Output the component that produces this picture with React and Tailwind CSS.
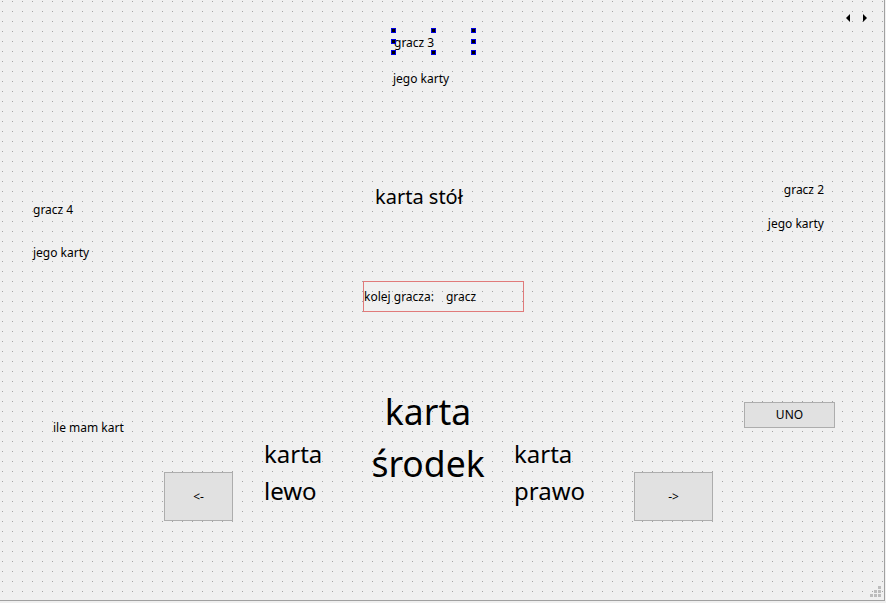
import React from "react";

const font = { fontFamily: '"Noto Sans", "Liberation Sans", sans-serif' };

function Button({ className = "", children }) {
  return (
    <div
      className={`absolute flex items-center justify-center border border-[#adadad] bg-[#e1e1e1] text-[12px] leading-none text-black ${className}`}
    >
      {children}
    </div>
  );
}

function Handle() {
  return <div className="h-[5px] w-[5px] border border-[#0000e0] bg-black" />;
}

export default function App() {
  return (
    <div className="h-[603px] w-[886px] overflow-hidden bg-[#f0f0f0]" style={font}>
      <div className="relative box-border h-[601px] w-[885px] border-b border-r border-[#a0a0a0] bg-[#f0f0f0] bg-[radial-gradient(circle_at_2.5px_1.5px,#a4a4a4_0.75px,transparent_0.85px)] bg-size-[10px_10px] text-[12px] leading-none text-black">
        {/* top-right scroll arrows */}
        <div className="absolute left-[846px] top-[14px] flex gap-[11px]">
          <svg width="5" height="8" viewBox="0 0 5 8">
            <path d="M4 0 L0 4 L4 8 Z" fill="#000" />
          </svg>
          <svg width="5" height="8" viewBox="0 0 5 8">
            <path d="M1 0 L5 4 L1 8 Z" fill="#000" />
          </svg>
        </div>

        {/* gracz 3 (selected) */}
        <div className="absolute left-[393px] top-[37px] flex flex-col gap-[24px] whitespace-nowrap">
          <span className="pl-[1px]">gracz 3</span>
          <span>jego karty</span>
        </div>
        <div className="absolute left-[391px] top-[28px] flex h-[27px] w-[86px] flex-col justify-between">
          <div className="flex justify-between pr-[1px]">
            <Handle />
            <Handle />
            <Handle />
          </div>
          <div className="flex justify-between pr-[1px]">
            <Handle />
            <Handle />
          </div>
          <div className="flex justify-between pr-[1px]">
            <Handle />
            <Handle />
            <Handle />
          </div>
        </div>

        {/* gracz 2 */}
        <div className="absolute left-[738px] top-[184px] flex w-[86px] flex-col items-end gap-[22px] whitespace-nowrap">
          <span>gracz 2</span>
          <span>jego karty</span>
        </div>

        {/* gracz 4 */}
        <div className="absolute left-[33px] top-[204px] flex flex-col gap-[31px] whitespace-nowrap">
          <span>gracz 4</span>
          <span>jego karty</span>
        </div>

        {/* karta stół */}
        <div className="absolute left-[375px] top-[187px] whitespace-nowrap text-[20px]">karta stół</div>

        {/* kolej gracza */}
        <div className="absolute left-[363px] top-[281px] box-border flex h-[31px] w-[161px] items-center border border-[#e07a7a] pt-[1px]">
          <span>kolej gracza:</span>
          <span className="ml-[12px]">gracz</span>
        </div>

        {/* ile mam kart */}
        <div className="absolute left-[53px] top-[422px] whitespace-nowrap">ile mam kart</div>

        {/* karta środek */}
        <div className="absolute left-[348px] top-[385px] flex w-[160px] flex-col items-center text-[35.5px] leading-[52px]">
          <span>karta</span>
          <span>środek</span>
        </div>

        {/* karta lewo */}
        <div className="absolute left-[264px] top-[435px] flex flex-col text-[24px] leading-[37px]">
          <span>karta</span>
          <span>lewo</span>
        </div>

        {/* karta prawo */}
        <div className="absolute left-[514px] top-[435px] flex flex-col text-[24px] leading-[37px]">
          <span>karta</span>
          <span>prawo</span>
        </div>

        {/* buttons */}
        <Button className="left-[164px] top-[472px] h-[49px] w-[69px]">&lt;-</Button>
        <Button className="left-[634px] top-[472px] h-[49px] w-[79px]">-&gt;</Button>
        <Button className="left-[744px] top-[402px] h-[26px] w-[91px]">UNO</Button>

        {/* size grip */}
        <div className="absolute left-[870px] top-[586px] grid grid-cols-3 gap-[1px]">
          <div className="h-[3px] w-[3px]" />
          <div className="h-[3px] w-[3px]" />
          <div className="h-[3px] w-[3px] bg-[#bcbcbc]" />
          <div className="h-[3px] w-[3px]" />
          <div className="h-[3px] w-[3px] bg-[#bcbcbc]" />
          <div className="h-[3px] w-[3px] bg-[#bcbcbc]" />
          <div className="h-[3px] w-[3px] bg-[#bcbcbc]" />
          <div className="h-[3px] w-[3px] bg-[#bcbcbc]" />
          <div className="h-[3px] w-[3px] bg-[#bcbcbc]" />
        </div>
      </div>
    </div>
  );
}
